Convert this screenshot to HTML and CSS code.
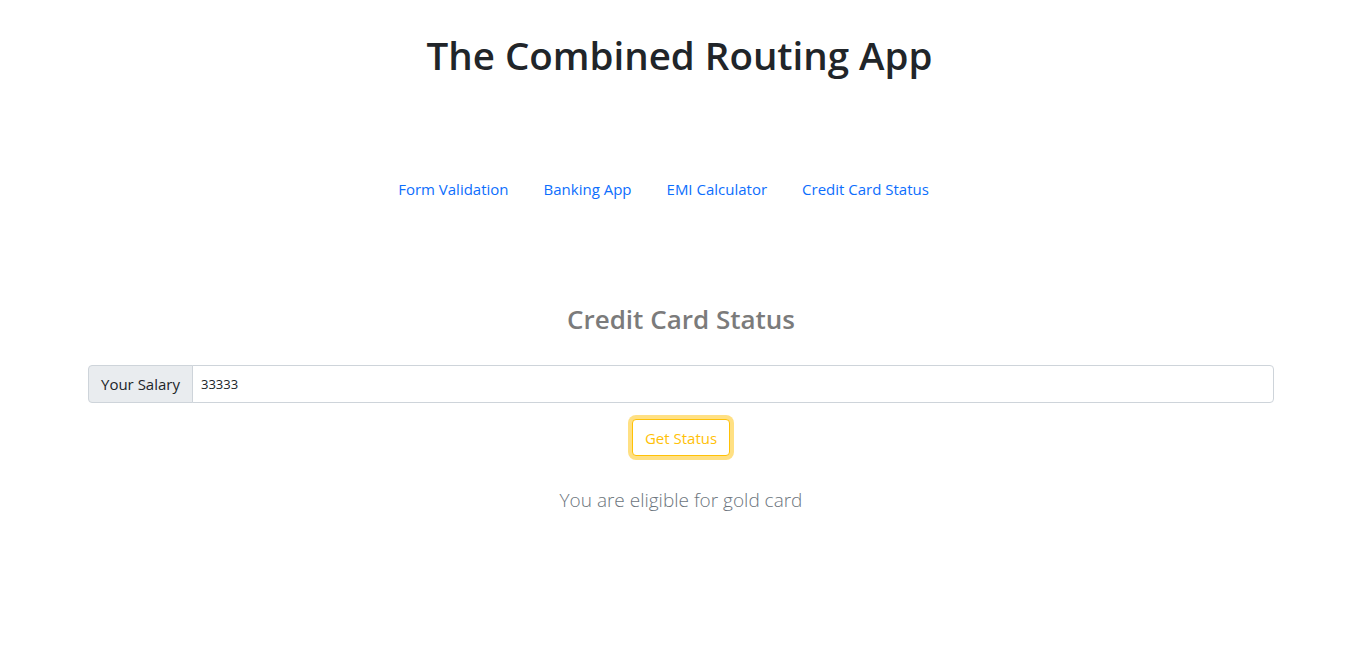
FILE: index.html
```html
<!DOCTYPE html>
<html lang="en">
<head>
<meta charset="utf-8">
<title>The Combined Routing App</title>
<link rel="stylesheet" href="styles.css">
</head>
<body>
<div class="app">
  <h1 class="title">The Combined Routing App</h1>
  <nav class="nav">
    <a class="nav-link" href="#">Form Validation</a>
    <a class="nav-link" href="#">Banking App</a>
    <a class="nav-link" href="#">EMI Calculator</a>
    <a class="nav-link" href="#">Credit Card Status</a>
  </nav>
  <main class="card-status">
    <h3 class="heading">Credit Card Status</h3>
    <div class="input-group">
      <span class="input-group-text">Your Salary</span>
      <input class="form-control" type="text" value="33333">
    </div>
    <div class="actions">
      <button class="btn-outline-warning" type="button">Get Status</button>
    </div>
    <p class="lead">You are eligible for gold card</p>
  </main>
</div>
</body>
</html>
```

FILE: styles.css
```css
* { box-sizing: border-box; }
html, body { margin: 0; padding: 0; background: #fff; }
body {
  font-family: "Segoe UI", "Open Sans", "Noto Sans", sans-serif;
  font-size: 16px;
  line-height: 1.5;
  color: #212529;
}
.app { display: flex; flex-direction: column; align-items: stretch; }
.title {
  margin: 31px 0 0;
  text-align: center;
  font-size: 38.5px;
  font-weight: 600;
  line-height: 48px;
  color: #212529;
}
.nav {
  display: flex;
  justify-content: center;
  margin-top: 98px;
  padding-right: 32px;
}
.nav-link {
  color: #0d6efd;
  text-decoration: none;
  padding: 0 17.5px;
  line-height: 24px;
  font-size: 15px;
}
.card-status {
  margin: 101px 85px 0 88px;
  display: flex;
  flex-direction: column;
}
.heading {
  margin: 0;
  text-align: center;
  font-size: 26px;
  font-weight: 600;
  line-height: 34px;
  color: #7b7b7b;
}
.input-group {
  display: flex;
  margin-top: 29px;
  height: 38px;
}
.input-group-text {
  display: flex;
  align-items: center;
  padding: 6px 12px;
  background: #e9ecef;
  border: 1px solid #ced4da;
  border-radius: 4px 0 0 4px;
  color: #212529;
  font-size: 15px;
  white-space: nowrap;
}
.form-control {
  flex: 1;
  min-width: 0;
  margin-left: -1px;
  padding: 6px 8px;
  border: 1px solid #ced4da;
  border-radius: 0 4px 4px 0;
  font-family: inherit;
  font-size: 13px;
  color: #212529;
  outline: none;
}
.actions {
  display: flex;
  justify-content: center;
  margin-top: 16px;
}
.btn-outline-warning {
  height: 37px;
  padding: 6px 12px;
  font-family: inherit;
  font-size: 15px;
  color: #ffc107;
  background: #fff;
  border: 1px solid #ffc107;
  border-radius: 4px;
  box-shadow: 0 0 0 4px rgba(255, 193, 7, 0.5);
}
.lead {
  margin: 29px 0 0;
  text-align: center;
  font-size: 19px;
  font-weight: 300;
  line-height: 30px;
  color: #6c757d;
}
```
